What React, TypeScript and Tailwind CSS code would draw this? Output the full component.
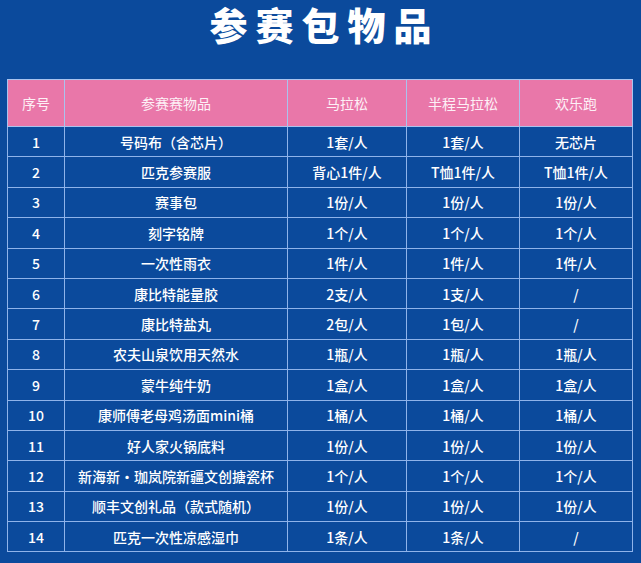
const rows: [string, string, string, string, string][] = [
  ["1", "号码布（含芯片）", "1套/人", "1套/人", "无芯片"],
  ["2", "匹克参赛服", "背心1件/人", "T恤1件/人", "T恤1件/人"],
  ["3", "赛事包", "1份/人", "1份/人", "1份/人"],
  ["4", "刻字铭牌", "1个/人", "1个/人", "1个/人"],
  ["5", "一次性雨衣", "1件/人", "1件/人", "1件/人"],
  ["6", "康比特能量胶", "2支/人", "1支/人", "/"],
  ["7", "康比特盐丸", "2包/人", "1包/人", "/"],
  ["8", "农夫山泉饮用天然水", "1瓶/人", "1瓶/人", "1瓶/人"],
  ["9", "蒙牛纯牛奶", "1盒/人", "1盒/人", "1盒/人"],
  ["10", "康师傅老母鸡汤面mini桶", "1桶/人", "1桶/人", "1桶/人"],
  ["11", "好人家火锅底料", "1份/人", "1份/人", "1份/人"],
  ["12", "新海新・珈岚院新疆文创搪瓷杯", "1个/人", "1个/人", "1个/人"],
  ["13", "顺丰文创礼品（款式随机）", "1份/人", "1份/人", "1份/人"],
  ["14", "匹克一次性凉感湿巾", "1条/人", "1条/人", "/"],
];

const headers = ["序号", "参赛赛物品", "马拉松", "半程马拉松", "欢乐跑"];
const widths = ["w-[57px]", "w-[223px]", "w-[119px]", "w-[113px]", "w-[113px]"];

export default function App() {
  return (
    <div
      className="h-[563px] w-[641px] overflow-hidden bg-[#0b4a9c] pt-px text-white"
      style={{ fontFamily: '"Noto Sans CJK SC", "Noto Sans", sans-serif' }}
    >
      <h1 className="-mt-[5px] pl-[8px] text-center text-[38px] font-black leading-[56px] tracking-[8px]">
        参赛包物品
      </h1>
      <div className="mt-[27px] px-[7px]">
        <table className="w-[625px] table-fixed border-collapse text-center text-[14px]">
          <colgroup>
            {widths.map((w, i) => (
              <col key={i} className={w} />
            ))}
          </colgroup>
          <thead>
            <tr className="h-[47px] bg-[#e977a9]">
              {headers.map((h) => (
                <th key={h} className="border border-[#a9c3ee] font-normal text-[#fdf0f6]">
                  {h}
                </th>
              ))}
            </tr>
          </thead>
          <tbody>
            {rows.map((r) => (
              <tr key={r[0]} className="h-[30.4px]">
                {r.map((c, i) => (
                  <td key={i} className="border border-[#8fb3ea] p-0 font-medium leading-none">
                    {c}
                  </td>
                ))}
              </tr>
            ))}
          </tbody>
        </table>
      </div>
    </div>
  );
}
